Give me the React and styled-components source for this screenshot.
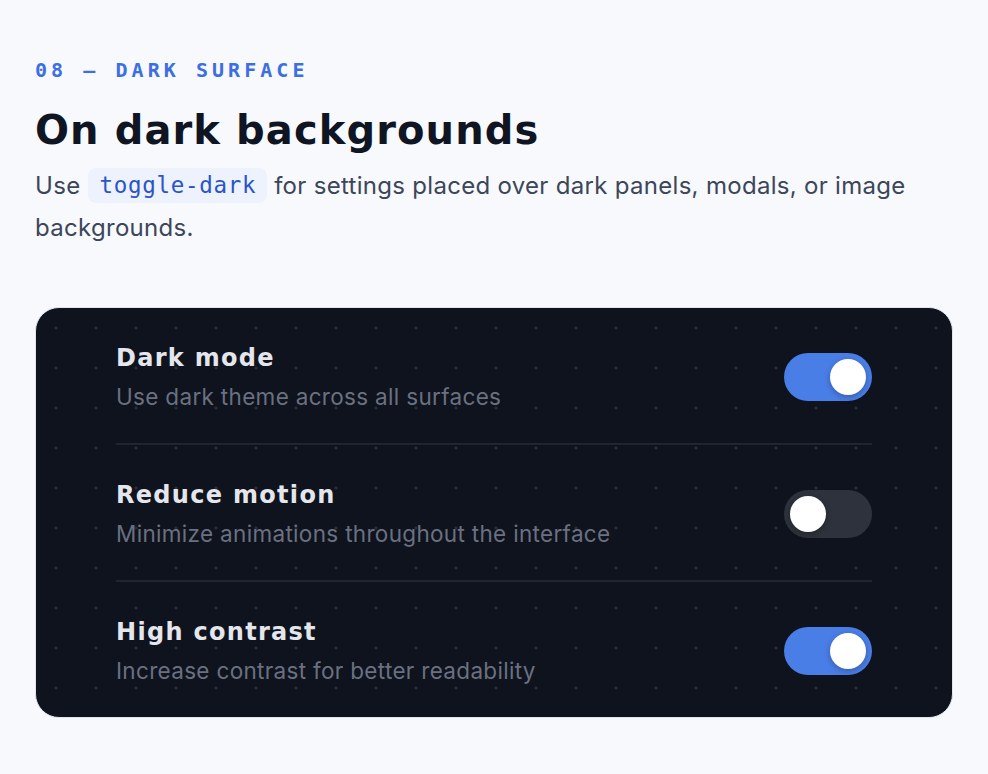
import React, { useState } from "react";
import styled, { createGlobalStyle } from "styled-components";

const GlobalStyle = createGlobalStyle`
  html, body {
    margin: 0;
    padding: 0;
    background: #f7f9fd;
  }
  body {
    font-family: Inter, "Noto Sans", sans-serif;
    -webkit-font-smoothing: antialiased;
  }
`;

const Page = styled.main`
  box-sizing: border-box;
  min-height: 774px;
  padding: 58px 35px 0 35px;
  background: #f7f9fd;
`;

const Eyebrow = styled.div`
  font-family: "DejaVu Sans Mono", "Liberation Mono", monospace;
  font-weight: 700;
  font-size: 20px;
  line-height: 24px;
  letter-spacing: 4.05px;
  color: #3d6fe2;
  text-transform: uppercase;
`;

const Heading = styled.h2`
  margin: 24px 0 0;
  font-family: "DejaVu Sans", Inter, sans-serif;
  font-weight: 700;
  font-size: 40px;
  line-height: 48px;
  letter-spacing: 1.1px;
  color: #0f1522;
`;

const Lead = styled.p`
  margin: 11px 0 0;
  font-family: Inter, "Noto Sans", sans-serif;
  font-size: 24px;
  line-height: 42px;
  letter-spacing: 0.3px;
  color: #3d4659;
`;

const Code = styled.code`
  display: inline-block;
  font-family: "DejaVu Sans Mono", "Liberation Mono", monospace;
  font-size: 22.5px;
  line-height: 35px;
  letter-spacing: 0.7px;
  color: #2b54c9;
  background: #edf2fc;
  border-radius: 8px;
  padding: 0 11px;
  margin: 0 7px 0 8px;
  vertical-align: 1px;
`;

const Card = styled.section`
  margin-top: 58px;
  border: 1px solid #e1e6ee;
  border-radius: 24px;
  padding: 0 80px 0 80px;
  background-color: #0e131e;
  background-image: radial-gradient(circle, #282d39 1.3px, transparent 1.8px);
  background-size: 40px 40px;
  background-position: 0 0;
  overflow: hidden;
`;

const Row = styled.div`
  display: flex;
  align-items: center;
  justify-content: space-between;
  padding: 35px 0 31px;
  border-top: ${(p) => (p.$first ? "none" : "2px solid #20252f")};
`;

const Texts = styled.div`
  display: flex;
  flex-direction: column;
  gap: 9px;
`;

const Title = styled.div`
  font-family: "DejaVu Sans", Inter, sans-serif;
  font-weight: 700;
  font-size: 24px;
  line-height: 30px;
  letter-spacing: 1.3px;
  color: #e4e6ec;
`;

const Desc = styled.div`
  font-family: Inter, "Noto Sans", sans-serif;
  font-size: 22.5px;
  line-height: 30px;
  letter-spacing: 0.32px;
  color: #6b7080;
`;

const Switch = styled.button`
  position: relative;
  flex: none;
  width: 88px;
  height: 48px;
  border: none;
  border-radius: 24px;
  padding: 0;
  margin-top: -2px;
  cursor: pointer;
  background: ${(p) => (p.$on ? "#4a7ee7" : "#2e323c")};
`;

const Knob = styled.span`
  position: absolute;
  top: 6px;
  left: ${(p) => (p.$on ? "46px" : "6px")};
  width: 36px;
  height: 36px;
  border-radius: 50%;
  background: #ffffff;
  box-shadow: 0 2px 6px rgba(0, 0, 0, 0.28);
`;

const settings = [
  { title: "Dark mode", desc: "Use dark theme across all surfaces", on: true },
  { title: "Reduce motion", desc: "Minimize animations throughout the interface", on: false },
  { title: "High contrast", desc: "Increase contrast for better readability", on: true },
];

export default function App() {
  const [state, setState] = useState(settings.map((s) => s.on));
  return (
    <>
      <GlobalStyle />
      <Page>
        <Eyebrow>08 — Dark surface</Eyebrow>
        <Heading>On dark backgrounds</Heading>
        <Lead>
          Use<Code>toggle-dark</Code>for settings placed over dark panels, modals, or image backgrounds.
        </Lead>
        <Card>
          {settings.map((s, i) => (
            <Row key={s.title} $first={i === 0}>
              <Texts>
                <Title>{s.title}</Title>
                <Desc>{s.desc}</Desc>
              </Texts>
              <Switch
                $on={state[i]}
                aria-pressed={state[i]}
                onClick={() => setState((st) => st.map((v, j) => (j === i ? !v : v)))}
              >
                <Knob $on={state[i]} />
              </Switch>
            </Row>
          ))}
        </Card>
      </Page>
    </>
  );
}
